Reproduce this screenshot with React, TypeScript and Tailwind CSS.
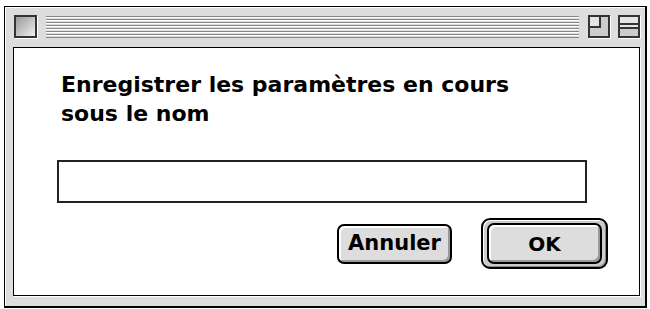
export default function App() {
  return (
    <div className="w-[650px] h-[309px] bg-white pt-[6px] pl-[4px] font-['DejaVu_Sans',sans-serif]">
      {/* window */}
      <div className="w-[643px] h-[302px] border border-black border-r-2 border-b-2 bg-[#dddddd] flex flex-col">
        <div className="flex-1 flex flex-col border-t border-l border-white">
          {/* title bar */}
          <div className="h-[39px] flex items-start pt-[7px] pl-[8px] pr-[5px] gap-[9px]">
            <div className="w-[23px] h-[23px] border-2 border-[#333] bg-[linear-gradient(135deg,#999,#eee)] shadow-[1px_1px_0_#fff]" />
            <div className="flex-1 h-[22px] mt-[1px] bg-[repeating-linear-gradient(to_bottom,#888_0_1px,#fff_1px_2px,#ddd_2px_3px)]" />
            <div className="flex gap-[8px]">
              <div className="w-[22px] h-[23px] border-2 border-[#333] bg-[#ccc] shadow-[1px_1px_0_#fff] relative">
                <div className="absolute left-[-2px] top-[-2px] w-[13px] h-[13px] border-2 border-[#333] bg-[#e4e4e4]" />
              </div>
              <div className="w-[22px] h-[23px] border-2 border-[#333] bg-[#ccc] shadow-[1px_1px_0_#fff] flex flex-col">
                <div className="h-[8px] border-b-2 border-[#333] bg-[#e4e4e4]" />
                <div className="h-[4px] border-b-2 border-[#333] bg-[#e4e4e4]" />
                <div className="flex-1" />
              </div>
            </div>
          </div>
          {/* content */}
          <div className="flex-1 mx-[7px] mb-[10px] mr-[5px] border border-black bg-white shadow-[1px_1px_0_#fff] pt-[22px] pl-[43px] pr-[31px]">
            <div className="ml-[4px] text-[22px] leading-[29px] font-bold text-black">
              Enregistrer les paramètres en cours
              <br />
              sous le nom
            </div>
            <div className="mt-[32px] w-[530px] h-[43px] border-2 border-[#222] bg-white" />
            <div className="mt-[15px] flex justify-end items-center gap-[29px]">
              <button className="w-[115px] h-[40px] rounded-[7px] border-2 border-black bg-[#dddddd] shadow-[inset_2px_2px_0_#fff,inset_-2px_-2px_0_#999] text-[21px] font-bold text-black">
                Annuler
              </button>
              <div className="w-[127px] h-[51px] rounded-[9px] border-2 border-black bg-[#cccccc] shadow-[inset_1px_1px_0_#fff,inset_-1px_-1px_0_#888] flex items-center justify-center">
                <button className="w-[115px] h-[41px] rounded-[7px] border-2 border-black bg-[#dddddd] shadow-[inset_2px_2px_0_#fff,inset_-2px_-2px_0_#999] text-[20px] font-bold text-black">
                  OK
                </button>
              </div>
            </div>
          </div>
        </div>
      </div>
    </div>
  );
}
